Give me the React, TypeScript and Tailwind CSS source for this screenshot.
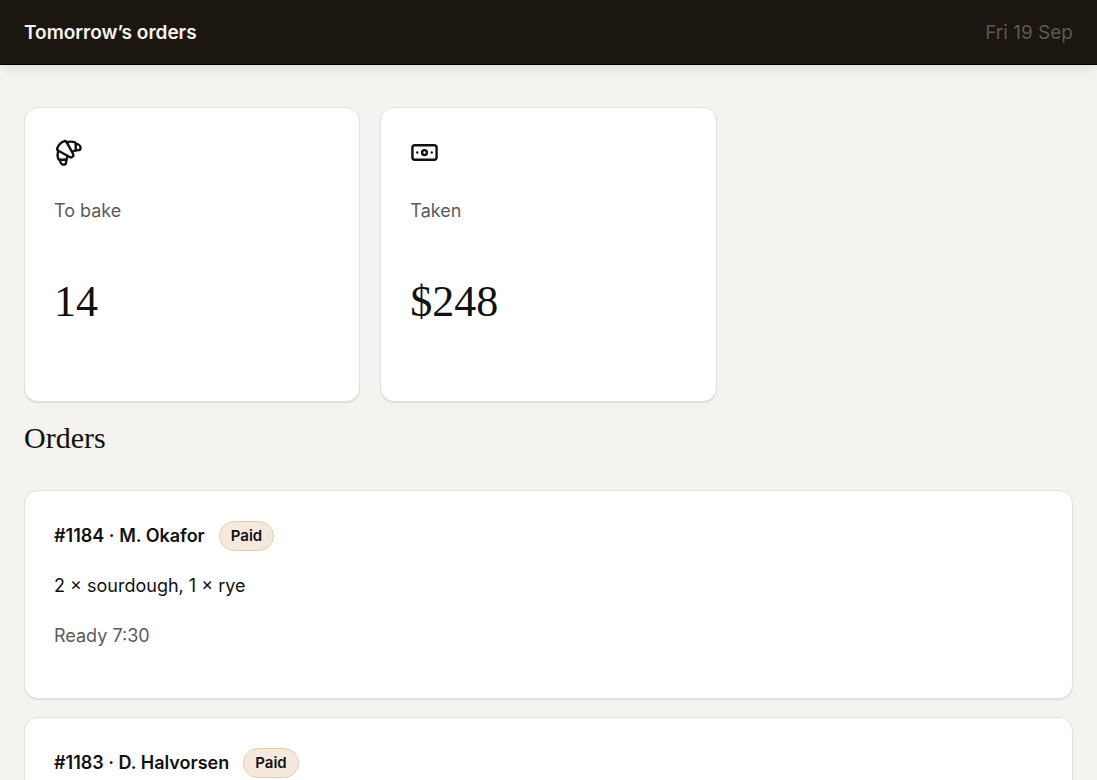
import { Banknote, Croissant, type LucideIcon } from 'lucide-react';

type Stat = { label: string; value: string; icon: LucideIcon };
type Order = { id: number; customer: string; items?: string; ready?: string };

const stats: Stat[] = [
  { label: 'To bake', value: '14', icon: Croissant },
  { label: 'Taken', value: '$248', icon: Banknote },
];

const orders: Order[] = [
  { id: 1184, customer: 'M. Okafor', items: '2 × sourdough, 1 × rye', ready: 'Ready 7:30' },
  { id: 1183, customer: 'D. Halvorsen' },
];

const card = 'rounded-[14px] border border-[#e3e2de] bg-white px-[29px] pt-[30px] shadow-[0_1px_1px_rgba(0,0,0,0.10)]';

function StatCard({ label, value, icon: Icon }: Stat) {
  return (
    <div className={`${card} pb-[67px]`}>
      <Icon size={29} strokeWidth={2} className="text-[#111]" />
      <p className="mt-[29px] text-[#5c5b59]">{label}</p>
      <p className="mt-11 font-['Liberation_Serif',serif] text-[44px] leading-[64px]">{value}</p>
    </div>
  );
}

function OrderCard({ id, customer, items, ready }: Order) {
  return (
    <li className={`${card} pb-[47px]`}>
      <div className="flex items-center gap-3.5">
        <h3 className="font-semibold">
          #{id} · {customer}
        </h3>
        <span className="rounded-full border border-[#e8cba8] bg-[#f5e9de] px-[11px] text-[15px] leading-7 font-semibold">
          Paid
        </span>
      </div>
      {items && <p className="mt-5">{items}</p>}
      {ready && <p className="mt-5 text-[#5c5b59]">{ready}</p>}
    </li>
  );
}

export default function App() {
  return (
    <div className="min-h-screen bg-[#f4f3ef] font-['Inter',sans-serif] text-[18px] leading-[30px] text-[#111]">
      <header className="flex items-center justify-between border-b border-black bg-[#1b1610] px-6 pt-[18px] pb-4 text-[19px] leading-[30px] shadow-[0_5px_12px_-2px_rgba(40,20,10,0.10)]">
        <h1 className="font-semibold text-[#f7f4ee]">Tomorrow’s orders</h1>
        <p className="text-[#5c5954]">Fri 19 Sep</p>
      </header>

      <main className="px-6 pt-[42px]">
        <section className="grid grid-cols-3 gap-5">
          {stats.map((stat) => (
            <StatCard key={stat.label} {...stat} />
          ))}
        </section>

        <h2 className="mt-4 font-['Liberation_Serif',serif] text-[30px] leading-10">Orders</h2>

        <ul className="mt-8 flex flex-col gap-[18px]">
          {orders.map((order) => (
            <OrderCard key={order.id} {...order} />
          ))}
        </ul>
      </main>
    </div>
  );
}
